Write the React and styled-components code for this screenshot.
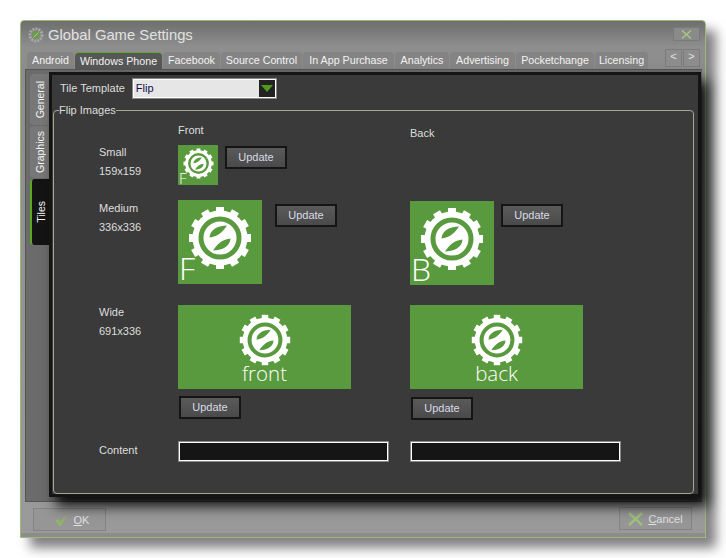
import React from "react";
import styled, { createGlobalStyle } from "styled-components";

const GlobalStyle = createGlobalStyle`
  html, body {
    margin: 0;
    background: #fff;
  }
  body {
    font-family: "Liberation Sans", Arial, sans-serif;
    font-size: 11px;
  }
`;

const Page = styled.div`
  width: 726px;
  height: 558px;
  padding: 20px 0 0 20px;
  box-sizing: border-box;
  overflow: hidden;
`;

const Window = styled.div`
  width: 686px;
  height: 518px;
  box-sizing: border-box;
  display: flex;
  flex-direction: column;
  border: 1px solid #9cb97a;
  border-radius: 4px 4px 0 0;
  background: linear-gradient(#6e6e6e 0, #8e8e8e 26px, #8c8c8c 48px, #9a9a9a 100%);
  box-shadow: 10px 10px 12px rgba(0, 0, 0, 0.5);
`;

const TitleBar = styled.div`
  height: 30px;
  flex: none;
  display: flex;
  align-items: center;
  padding: 0 5px 2px 7px;
  box-sizing: border-box;
  gap: 4px;
  color: #e2e2e2;
  font-size: 14.8px;
`;

const CloseBox = styled.div`
  margin-left: auto;
  margin-top: -2px;
  width: 25px;
  height: 12px;
  border: 1px solid #7a7a7a;
  background: #8a8a8a;
  display: flex;
  align-items: center;
  justify-content: center;
`;

const TabRow = styled.div`
  height: 18px;
  flex: none;
  display: flex;
  align-items: flex-end;
  padding-left: 6px;
`;

const Tab = styled.div`
  width: ${(p) => p.$w}px;
  height: 17px;
  margin-right: 1px;
  box-sizing: border-box;
  flex: none;
  text-align: center;
  line-height: 17px;
  font-size: 10.7px;
  color: #f2f2f2;
  white-space: nowrap;
  border-radius: 4px 4px 0 0;
  background: ${(p) => (p.$active ? "#575757" : "#848484")};
  border-top: ${(p) => (p.$active ? "1px solid #62a82c" : "none")};
`;

const ScrollButtons = styled.div`
  margin-left: auto;
  margin-right: 5px;
  margin-bottom: 2px;
  display: flex;
  gap: 1px;
`;

const ScrollButton = styled.div`
  width: 15px;
  height: 16px;
  background: #8d8d8d;
  border: 1px solid #7c7c7c;
  color: #e4e4e4;
  font-size: 11px;
  line-height: 13px;
  text-align: center;
`;

const Body = styled.div`
  position: relative;
  z-index: 1;
  height: 433px;
  flex: none;
  margin: 0 3px 0 4px;
  display: flex;
  background: #6b6b6b;
  border: 1px solid #555;
  border-right: none;
  box-sizing: border-box;
`;

const SideTabs = styled.div`
  width: 23px;
  flex: none;
  padding: 4px 0 0 4px;
  box-sizing: border-box;
  display: flex;
  flex-direction: column;
  gap: 1px;
`;

const SideTab = styled.div`
  width: 19px;
  height: ${(p) => p.$h}px;
  box-sizing: border-box;
  display: flex;
  align-items: center;
  justify-content: center;
  border-radius: 4px 0 0 4px;
  background: ${(p) => (p.$active ? "#141414" : "#777")};
  border-left: ${(p) => (p.$active ? "2px solid #5aa81e" : "none")};
  color: #f4f4f4;
  font-size: 10.5px;
`;

const SideLabel = styled.span`
  writing-mode: vertical-rl;
  transform: rotate(180deg);
`;

const Panel = styled.div`
  width: 652px;
  height: 425px;
  margin-top: 2px;
  flex: none;
  box-sizing: border-box;
  border: 3px solid #141414;
  background: #3a3a3a;
  color: #dedede;
  padding: 0 1px 0 1px;
  box-shadow: 7px 9px 12px rgba(0, 0, 0, 0.9);
`;

const TemplateRow = styled.div`
  height: 26px;
  display: flex;
  align-items: center;
  padding-left: 7px;
  gap: 7px;
`;

const Select = styled.div`
  width: 145px;
  height: 21px;
  box-sizing: border-box;
  border: 2px solid #fff;
  outline: 1px solid #888;
  outline-offset: -1px;
  background: #e6e6e6;
  color: #10104a;
  display: flex;
  align-items: center;
  justify-content: space-between;
  padding-left: 2px;
`;

const SelectArrow = styled.div`
  width: 16px;
  height: 17px;
  background: #222;
  display: flex;
  align-items: center;
  justify-content: center;
`;

const Group = styled.fieldset`
  margin: 3px 0 0 0;
  padding: 0 0 0 45px;
  width: 641px;
  height: 390px;
  box-sizing: border-box;
  border: 1px solid #a8a88e;
  border-radius: 4px;
`;

const GroupTitle = styled.legend`
  padding: 0;
  margin-left: -40px;
  line-height: 13px;
`;

const FormRow = styled.div`
  display: grid;
  grid-template-columns: 79px 232px 1fr;
  height: ${(p) => p.$h}px;
  margin-top: ${(p) => p.$mt || 0}px;
`;

const SizeLabel = styled.div`
  line-height: 19px;
  margin-top: ${(p) => p.$mt || 0}px;
`;

const Cell = styled.div`
  display: flex;
  flex-direction: ${(p) => (p.$stack ? "column" : "row")};
  gap: 7px;
  padding-top: ${(p) => p.$top || 0}px;
`;

const Tile = styled.div`
  position: relative;
  width: ${(p) => p.$w}px;
  height: ${(p) => p.$h}px;
  flex: none;
  background: #5a9a3e;
  color: #fff;
  display: flex;
  flex-direction: column;
  align-items: center;
  justify-content: ${(p) => (p.$wide ? "flex-start" : "center")};
  padding-top: ${(p) => (p.$wide ? 9 : 0)}px;
  padding-bottom: ${(p) => p.$pb || 0}px;
  box-sizing: border-box;
`;

const TileLetter = styled.span`
  position: absolute;
  left: 1px;
  bottom: ${(p) => (p.$small ? -1 : 0)}px;
  font-family: "Open Sans", sans-serif;
  font-weight: 300;
  font-size: ${(p) => (p.$small ? 15 : 32)}px;
  line-height: 1;
`;

const TileCaption = styled.span`
  font-family: "Open Sans", sans-serif;
  font-weight: 300;
  font-size: 20.5px;
  line-height: 22px;
  margin-top: -4px;
`;

const UpdateButton = styled.button`
  width: 62px;
  height: 23px;
  flex: none;
  margin: ${(p) => p.$m || "0"};
  padding: 0 0 1px;
  box-sizing: border-box;
  font: inherit;
  color: #d8dbe6;
  border: 2px solid #151515;
  background: linear-gradient(#5a5a5a, #4a4a4a);
`;

const TextField = styled.div`
  width: 211px;
  height: 21px;
  box-sizing: border-box;
  background: #151515;
  border: 2px solid #fff;
  outline: 1px solid #888;
  outline-offset: -1px;
`;

const Footer = styled.div`
  flex: 1;
  display: flex;
  justify-content: space-between;
  padding: 5px 13px 0 12px;
  border-bottom: 4px solid #8c8c8c;
`;

const ActionButton = styled.div`
  width: 73px;
  height: 23px;
  box-sizing: border-box;
  border: 1px solid #848484;
  background: #969696;
  color: #e0e0e0;
  display: flex;
  align-items: center;
  justify-content: center;
  gap: 5px;
  margin-top: ${(p) => p.$mt || 0}px;
  padding-left: ${(p) => p.$pl || 0}px;

  u {
    text-underline-offset: 1px;
  }
`;

const gearTeeth = Array.from({ length: 12 }, (_, i) => i * 30);

// white cog, green ring, white disc with the two green leaves
function Gear({ size }) {
  const leaf = "M7 -12.5 C-1 -12.5 -10 -9 -10.5 -0.5 C-3 -1 3 -6 7 -12.5 Z";
  return (
    <svg width={size} height={size} viewBox="-32 -32 64 64">
      <g fill="#fff">
        {gearTeeth.map((a) => (
          <rect key={a} x="-4" y="-31" width="8" height="6" transform={`rotate(${a})`} />
        ))}
      </g>
      <circle r="27.5" fill="#fff" />
      <circle r="19" fill="none" stroke="#5a9a3e" strokeWidth="5" />
      <path fill="#5a9a3e" d={leaf} />
      <path fill="#5a9a3e" d={leaf} transform="rotate(180)" />
    </svg>
  );
}

function AppIcon() {
  return (
    <svg width="16" height="16" viewBox="-8 -8 16 16">
      <circle r="6" fill="none" stroke="#a8a8a8" strokeWidth="3" strokeDasharray="2 1" />
      <circle r="4" fill="#6f9a52" />
      <path d="M2.5 -2.5 L-2.5 2.5" stroke="#a8c090" strokeWidth="1" />
    </svg>
  );
}

const tabs = [
  ["Android", 47],
  ["Windows Phone", 87, true],
  ["Facebook", 57],
  ["Source Control", 81],
  ["In App Purchase", 91],
  ["Analytics", 54],
  ["Advertising", 65],
  ["Pocketchange", 78],
  ["Licensing", 53],
];

export default function App() {
  return (
    <Page>
      <GlobalStyle />
      <Window>
        <TitleBar>
          <AppIcon />
          <span>Global Game Settings</span>
          <CloseBox>
            <svg width="11" height="9" viewBox="0 0 11 9">
              <path d="M1 0.5 L10 8.5 M10 0.5 L1 8.5" stroke="#a6c882" strokeWidth="1.5" />
            </svg>
          </CloseBox>
        </TitleBar>
        <TabRow>
          {tabs.map(([label, w, active]) => (
            <Tab key={label} $w={w} $active={active}>
              {label}
            </Tab>
          ))}
          <ScrollButtons>
            <ScrollButton>&lt;</ScrollButton>
            <ScrollButton>&gt;</ScrollButton>
          </ScrollButtons>
        </TabRow>
        <Body>
          <SideTabs>
            <SideTab $h={51}>
              <SideLabel>General</SideLabel>
            </SideTab>
            <SideTab $h={52}>
              <SideLabel>Graphics</SideLabel>
            </SideTab>
            <SideTab $h={66} $active>
              <SideLabel>Tiles</SideLabel>
            </SideTab>
          </SideTabs>
          <Panel>
            <TemplateRow>
              <span>Tile Template</span>
              <Select>
                <span>Flip</span>
                <SelectArrow>
                  <svg width="12" height="7" viewBox="0 0 12 7">
                    <path d="M0 0 H12 L6 7 Z" fill="#4f9a1e" />
                  </svg>
                </SelectArrow>
              </Select>
            </TemplateRow>
            <Group>
              <GroupTitle>Flip Images</GroupTitle>
              <FormRow $h={28}>
                <span />
                <Cell $top={7}>Front</Cell>
                <Cell $top={10}>Back</Cell>
              </FormRow>
              <FormRow $h={40}>
                <SizeLabel $mt={-2}>
                  Small
                  <br />
                  159x159
                </SizeLabel>
                <Cell>
                  <Tile $w={40} $h={40} $pb={4}>
                    <Gear size={31} />
                    <TileLetter $small>F</TileLetter>
                  </Tile>
                  <UpdateButton $m="1px 0 0 0">Update</UpdateButton>
                </Cell>
              </FormRow>
              <FormRow $h={85} $mt={15}>
                <SizeLabel $mt={-1}>
                  Medium
                  <br />
                  336x336
                </SizeLabel>
                <Cell>
                  <Tile $w={84} $h={84} $pb={9}>
                    <Gear size={64} />
                    <TileLetter>F</TileLetter>
                  </Tile>
                  <UpdateButton $m="4px 0 0 6px">Update</UpdateButton>
                </Cell>
                <Cell $top={1}>
                  <Tile $w={84} $h={84} $pb={9}>
                    <Gear size={64} />
                    <TileLetter>B</TileLetter>
                  </Tile>
                  <UpdateButton $m="3px 0 0 0">Update</UpdateButton>
                </Cell>
              </FormRow>
              <FormRow $h={115} $mt={20}>
                <SizeLabel $mt={-2}>
                  Wide
                  <br />
                  691x336
                </SizeLabel>
                <Cell $stack>
                  <Tile $w={173} $h={84} $wide>
                    <Gear size={52} />
                    <TileCaption>front</TileCaption>
                  </Tile>
                  <UpdateButton $m="0 0 0 1px">Update</UpdateButton>
                </Cell>
                <Cell $stack>
                  <Tile $w={173} $h={84} $wide>
                    <Gear size={52} />
                    <TileCaption>back</TileCaption>
                  </Tile>
                  <UpdateButton $m="1px 0 0 1px">Update</UpdateButton>
                </Cell>
              </FormRow>
              <FormRow $h={21} $mt={21}>
                <SizeLabel>Content</SizeLabel>
                <Cell>
                  <TextField />
                </Cell>
                <Cell>
                  <TextField />
                </Cell>
              </FormRow>
            </Group>
          </Panel>
        </Body>
        <Footer>
          <ActionButton $mt={1} $pl={4}>
            <svg width="15" height="14" viewBox="0 0 16 14">
              <path d="M1 8 L5 6 L7 8.5 L15 0 L7.5 13.5 H6 Z" fill="#8fb56a" />
            </svg>
            <span>
              <u>O</u>K
            </span>
          </ActionButton>
          <ActionButton>
            <svg width="15" height="14" viewBox="0 0 15 14">
              <path d="M1 1 L14 13 M14 1 L1 13" stroke="#9fc07a" strokeWidth="2.4" />
            </svg>
            <span>
              <u>C</u>ancel
            </span>
          </ActionButton>
        </Footer>
      </Window>
    </Page>
  );
}
